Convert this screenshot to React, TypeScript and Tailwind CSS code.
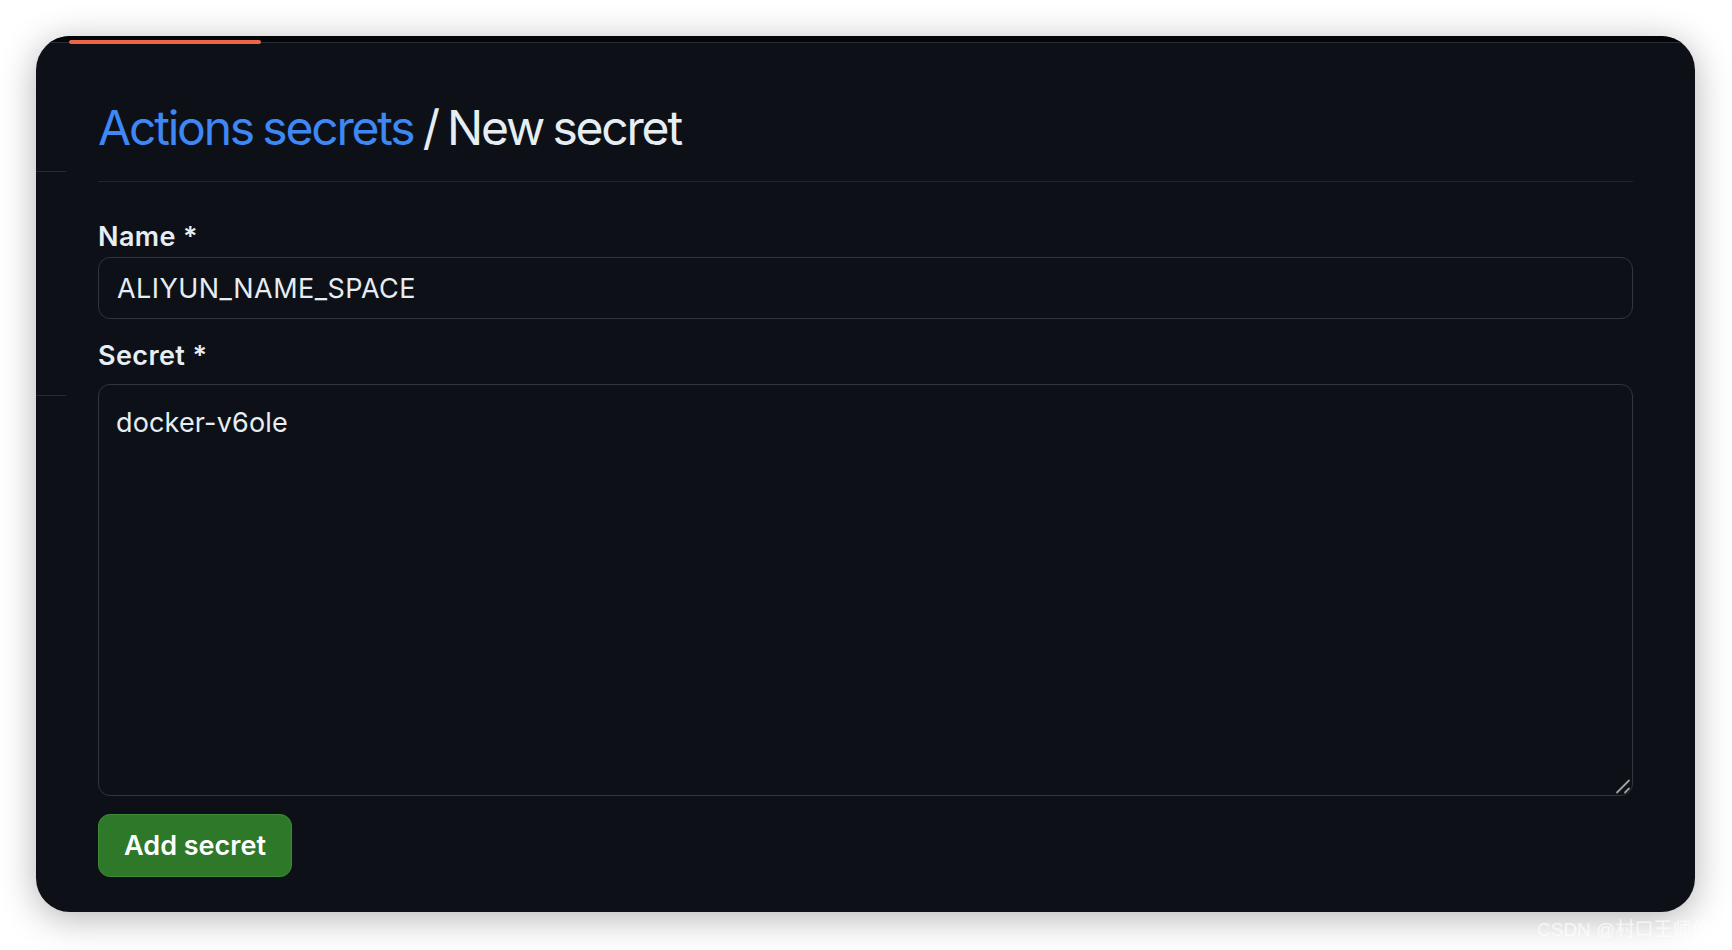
import React from 'react';

const font = { fontFamily: 'Inter, "Noto Sans", sans-serif' };

export default function App() {
  return (
    <div
      className="relative w-[1732px] h-[950px] bg-white pt-[36px] pl-[36px] pr-[37px] pb-[38px] overflow-hidden"
      style={font}
    >
      {/* Card */}
      <div className="relative h-full rounded-[34px] overflow-hidden bg-[#0d1117] flex flex-col shadow-[0_6px_36px_rgba(0,0,0,0.3)]">
        {/* Top strip + progress bar */}
        <div className="h-[6px] bg-[#010409] shrink-0" />
        <div className="h-px bg-[#2a2f37] shrink-0" />
        <div className="absolute left-[33px] top-[4px] w-[192px] h-[4px] rounded-full bg-[#ec6547]" />

        <div className="flex flex-1">
          {/* Sidebar remnant */}
          <div className="w-[30px] shrink-0 flex flex-col">
            <div className="mt-[128px] h-px bg-[#262b33]" />
            <div className="mt-[223px] h-px bg-[#262b33]" />
          </div>

          {/* Main */}
          <div className="flex-1 ml-[32px] mr-[62px] flex flex-col">
            <div className="mt-[54px] pb-[22px] border-b border-[#21262d]">
              <h1 className="text-[48px] leading-[62px] font-normal tracking-[-2.2px] [word-spacing:-2px] text-[#e6edf3]">
                <span className="text-[#3f87f5]">Actions secrets</span> / New secret
              </h1>
            </div>

            <label className="mt-[37px] h-[36px] text-[27px] leading-[36px] font-semibold tracking-[0.4px] text-[#e6edf3]">
              Name *
            </label>
            <div className="mt-[2px] h-[62px] rounded-[12px] border border-[#30363d] bg-[#0d1117] pl-[18px] pt-[13px] text-[27px] leading-[36px] tracking-[0.45px] text-[#e6edf3]">
              ALIYUN_NAME_SPACE
            </div>

            <label className="mt-[19px] h-[36px] text-[27px] leading-[36px] font-semibold tracking-[0.4px] text-[#e6edf3]">
              Secret *
            </label>
            <div className="relative mt-[10px] h-[412px]">
              <textarea
                readOnly
                defaultValue="docker-v6ole"
                className="block w-full h-full rounded-[12px] border border-[#30363d] bg-[#0d1117] pl-[17px] pt-[20px] text-[27px] leading-[36px] tracking-[0.15px] text-[#e6edf3] outline-none resize-none"
                style={font}
              />
              {/* resize grip */}
              <svg
                className="absolute right-[2px] bottom-[2px] w-[16px] h-[16px] pointer-events-none"
                viewBox="0 0 16 16"
              >
                <path d="M2 14.5 L14 2.5" stroke="#a0a0a0" strokeWidth="1.8" strokeLinecap="round" />
                <path d="M10 14.5 L14 10.5" stroke="#a0a0a0" strokeWidth="1.8" strokeLinecap="round" />
              </svg>
            </div>

            <div className="mt-[18px]">
              <button className="h-[63px] w-[194px] rounded-[12px] border border-[#3d8a39] bg-[#2d7829] text-[27px] leading-[36px] font-semibold text-white">
                Add secret
              </button>
            </div>
          </div>
        </div>
      </div>

      {/* Watermark */}
      <div
        className="absolute left-[1537px] top-[918px] text-[19px] leading-[24px] text-white/70 whitespace-nowrap"
        style={{ fontFamily: '"Liberation Sans", "Noto Sans CJK SC", sans-serif' }}
      >
        CSDN @村口王师傅
      </div>
    </div>
  );
}
